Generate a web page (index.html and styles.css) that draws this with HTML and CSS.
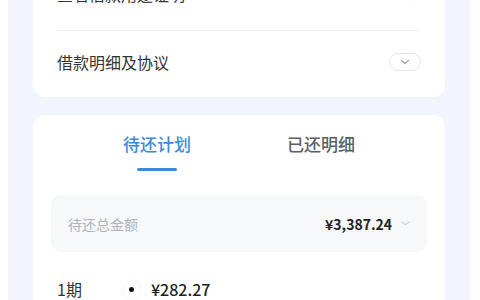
FILE: index.html
```html
<!DOCTYPE html>
<html lang="zh-CN">
  <head>
    <meta charset="UTF-8" />
    <title>借款详情</title>
    <link rel="stylesheet" href="styles.css">
  </head>
  <body>
    <div class="page">
      <div class="card card-top">
        <div class="row">
          <span>查看借款用途证明</span>
          <span class="arrow">›</span>
        </div>
        <div class="row">
          <span>借款明细及协议</span>
          <span class="pill">
            <svg width="10" height="6" viewBox="0 0 10 6"><path d="M1.5 1.5 L5 4.5 L8.5 1.5" fill="none" stroke="#a9abb8" stroke-width="1.6" stroke-linecap="round" stroke-linejoin="round"/></svg>
          </span>
        </div>
      </div>

      <div class="card card-plan">
        <div class="tabs">
          <div class="tab active">待还计划</div>
          <div class="tab">已还明细</div>
        </div>
        <div class="total">
          <span class="total-label">待还总金额</span>
          <span class="total-value">
            ¥3,387.24
            <svg width="9" height="5" viewBox="0 0 9 5"><path d="M1 1 L4.5 3.8 L8 1" fill="none" stroke="#cfd1d8" stroke-width="1.2" stroke-linecap="round"/></svg>
          </span>
        </div>
        <div class="term">
          <span class="term-no">1期</span>
          <span class="dot"></span>
          <span class="term-amount">¥282.27</span>
        </div>
      </div>
    </div>
  </body>
</html>
```

FILE: styles.css
```css
body {
  margin: 0;
  background: #fff;
  font-family: "Noto Sans CJK SC", "Noto Sans", sans-serif;
  color: #333;
}
.page {
  margin: 0 10px 0 8px;
  height: 300px;
  padding: 0 25px;
  background: #f3f5fd;
  overflow: hidden;
}
.card {
  background: #fff;
  border-radius: 12px;
}
.card-top {
  margin-top: -37px;
  padding: 0 24px;
}
.row {
  height: 67px;
  padding-bottom: 5px;
  box-sizing: border-box;
  display: flex;
  align-items: center;
  justify-content: space-between;
  font-size: 16px;
  color: #333;
}
.row + .row {
  border-top: 1px solid #eef0f3;
}
.arrow {
  color: #c5c7cf;
  font-size: 18px;
  margin-right: 4px;
}
.pill {
  width: 30px;
  height: 16px;
  border: 1px solid #e6e7ec;
  border-radius: 9px;
  display: flex;
  align-items: center;
  justify-content: center;
}
.card-plan {
  margin-top: 18px;
  padding: 0 18px;
  height: 220px;
}
.tabs {
  display: flex;
  justify-content: center;
  padding-top: 17px;
}
.tab {
  width: 164px;
  text-align: center;
  font-size: 17px;
  font-weight: 500;
  color: #5b5f69;
  height: 39px;
  line-height: 24px;
  position: relative;
}
.tab.active {
  color: #3a8ad8;
}
.tab.active::after {
  content: "";
  position: absolute;
  left: 62px;
  bottom: 0;
  width: 40px;
  height: 3px;
  border-radius: 2px;
  background: #3a8ad8;
}
.total {
  margin-top: 24px;
  height: 57px;
  background: #f7f8fa;
  border-radius: 10px;
  padding: 0 17px;
  display: flex;
  align-items: center;
  justify-content: space-between;
}
.total-label {
  font-size: 14px;
  color: #b0b2b8;
}
.total-value {
  font-size: 14px;
  font-weight: 700;
  color: #222;
  display: flex;
  align-items: center;
  gap: 9px;
}
.term {
  display: flex;
  align-items: center;
  height: 30px;
  margin-top: 22px;
  padding-left: 6px;
  font-size: 16px;
}
.term-no {
  width: 72px;
  color: #333;
}
.dot {
  width: 5px;
  height: 5px;
  border-radius: 50%;
  background: #111;
  box-shadow: 0 0 0 5px #fff, 0 0 6px 5px #eceef3;
  margin-right: 17px;
}
.term-amount {
  font-weight: 500;
  color: #222;
}
```
